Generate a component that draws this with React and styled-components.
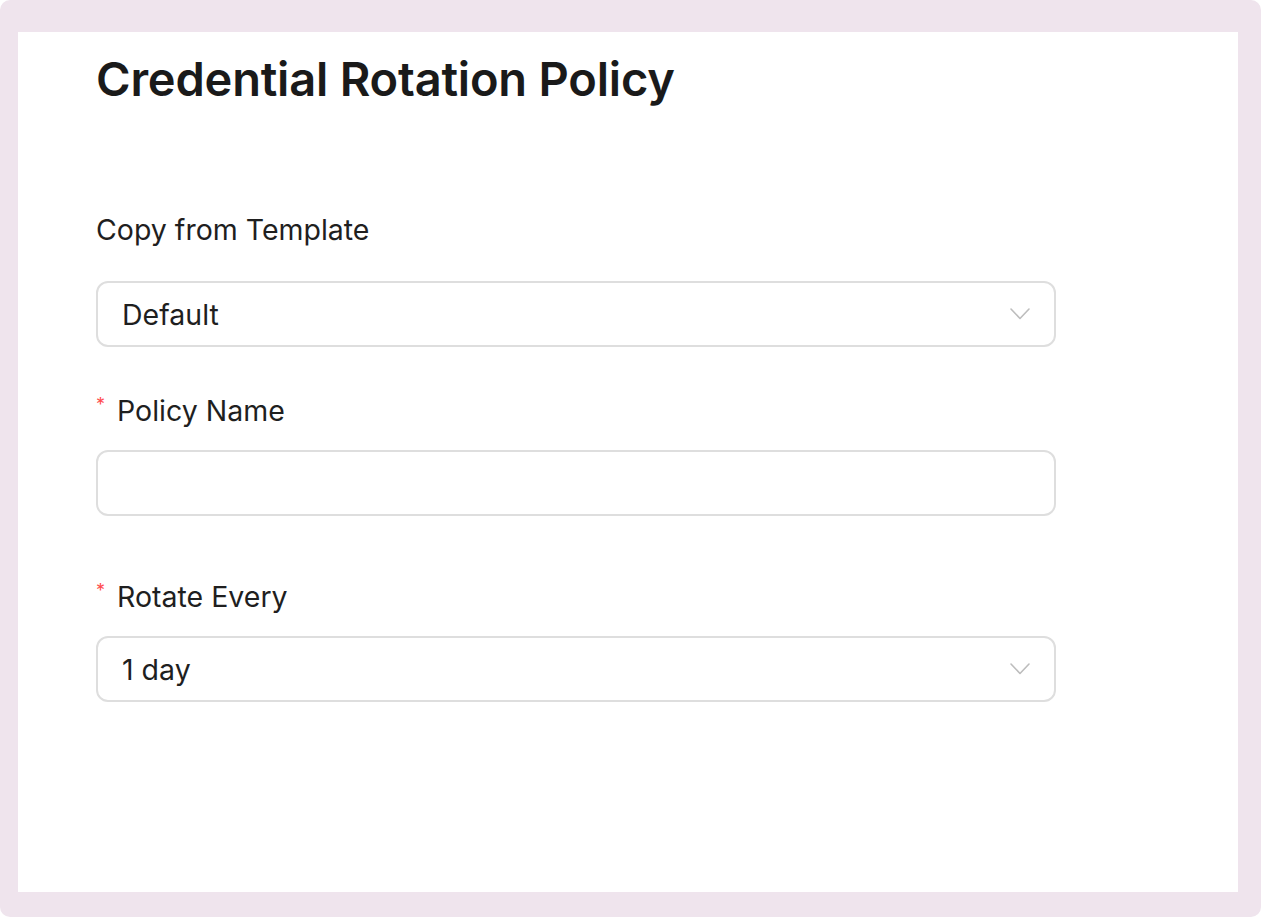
import styled, { createGlobalStyle } from 'styled-components'

const GlobalStyle = createGlobalStyle`
  html, body {
    margin: 0;
    padding: 0;
    background: #ffffff;
  }
  body {
    font-family: Inter, "Noto Sans", "Liberation Sans", sans-serif;
    color: #1f1f1f;
  }
`

const Frame = styled.div`
  box-sizing: border-box;
  width: 1261px;
  height: 917px;
  padding: 32px 23px 25px 18px;
  background: #efe4ed;
  border-radius: 10px;
  display: flex;
`

const Panel = styled.div`
  flex: 1;
  background: #ffffff;
  padding: 18px 0 0 78px;
  display: flex;
  flex-direction: column;
`

const Title = styled.h1`
  margin: 0 0 105px;
  font-size: 47px;
  line-height: 57px;
  font-weight: 600;
  color: #1a1a1a;
  letter-spacing: -0.2px;
`

const Field = styled.div`
  display: flex;
  flex-direction: column;
  width: 960px;
  margin-bottom: ${(p) => p.$gapAfter || 0}px;
`

const Label = styled.label`
  display: flex;
  align-items: center;
  height: 34px;
  font-size: 28.5px;
  color: #1f1f1f;
  margin-bottom: ${(p) => p.$gap}px;
`

const Required = styled.span`
  align-self: flex-start;
  color: #ff4d4f;
  font-size: 18px;
  line-height: 18px;
  margin: 3px 12px 0 0;
`

const Box = styled.div`
  box-sizing: border-box;
  height: 66px;
  border: 2px solid #dedede;
  border-radius: 12px;
  padding: 0 24px;
  display: flex;
  align-items: center;
  justify-content: space-between;
  font-size: 28.5px;
  color: #1f1f1f;
  background: #fff;
`

const Chevron = () => (
  <svg width="20" height="12" viewBox="0 0 20 12" fill="none">
    <path d="M1 1l9 9.5L19 1" stroke="#bdbdbd" strokeWidth="1.6" strokeLinecap="round" strokeLinejoin="round" />
  </svg>
)

export default function App() {
  return (
    <>
      <GlobalStyle />
      <Frame>
        <Panel>
          <Title>Credential Rotation Policy</Title>
          <Field $gapAfter={46}>
            <Label $gap={35}>Copy from Template</Label>
            <Box>
              <span>Default</span>
              <Chevron />
            </Box>
          </Field>
          <Field $gapAfter={63}>
            <Label $gap={23}>
              <Required>*</Required>Policy Name
            </Label>
            <Box />
          </Field>
          <Field>
            <Label $gap={23}>
              <Required>*</Required>Rotate Every
            </Label>
            <Box>
              <span>1 day</span>
              <Chevron />
            </Box>
          </Field>
        </Panel>
      </Frame>
    </>
  )
}
